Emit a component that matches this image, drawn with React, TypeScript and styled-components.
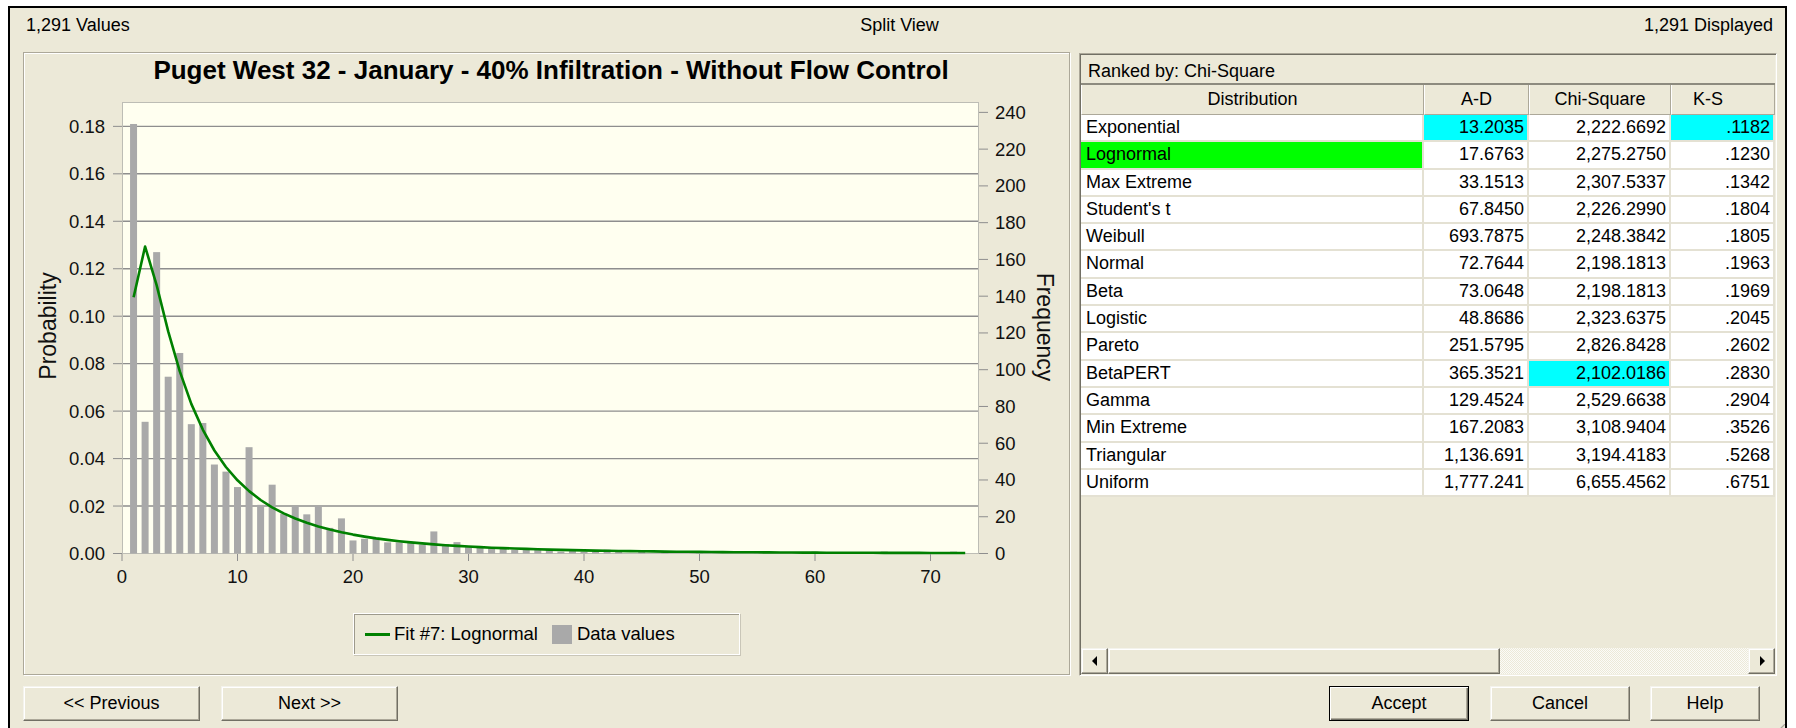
import React from "react";
import styled, { createGlobalStyle } from "styled-components";

const FACE = "#ece9d8";
const GRID = "#e4e1d3";
const SHADOW = "#aca899";
const DARK = "#716f64";

const GlobalStyle = createGlobalStyle`
  html, body { margin: 0; padding: 0; background: #fff; overflow: hidden; }
  body { font-family: "Liberation Sans", Arial, sans-serif; color: #000; }
`;

const Window = styled.div`
  position: relative;
  margin: 6px 0 0 8px;
  width: 1779px;
  height: 730px;
  box-sizing: border-box;
  border: 2px solid #000;
  border-bottom: none;
  background: ${FACE};
  display: flex;
  flex-direction: column;
  font-size: 18px;
  overflow: hidden;
`;

const StatusBar = styled.div`
  height: 34px;
  display: grid;
  grid-template-columns: 1fr auto 1fr;
  align-items: center;
  padding: 0 12px 0 16px;
`;

const StatusText = styled.span<{ $align: "left" | "center" | "right" }>`
  text-align: ${(p) => p.$align};
  white-space: nowrap;
`;

const Content = styled.div`
  display: flex;
  align-items: flex-start;
  gap: 9px;
  padding: 10px 0 0 13px;
`;

const ChartPanel = styled.div`
  width: 1047px;
  height: 623px;
  box-sizing: border-box;
  border: 1px solid ${SHADOW};
  box-shadow: inset 1px 1px 0 #fff, 1px 1px 0 #fff;
  display: flex;
  flex-direction: column;
  align-items: center;
`;

const ChartTitle = styled.div`
  height: 34px;
  line-height: 34px;
  padding-left: 9px;
  font-size: 26px;
  font-weight: bold;
  white-space: nowrap;
`;

const PlotSvg = styled.svg`
  display: block;
  width: 1045px;
  height: 518px;
  font-family: "Liberation Sans", Arial, sans-serif;
`;

const Legend = styled.div`
  margin-top: 8px;
  width: 387px;
  height: 42px;
  box-sizing: border-box;
  display: flex;
  align-items: center;
  padding-left: 11px;
  font-size: 18.5px;
  border: 1px solid #fff;
  box-shadow: inset 1px 1px 0 #9d9a8c, 1px 1px 0 #c9c6b8;
`;

const LegendLine = styled.span`
  width: 25px;
  height: 3px;
  background: #008000;
  margin-right: 4px;
`;

const LegendSwatch = styled.span`
  width: 20px;
  height: 19px;
  background: #a9a9a9;
  margin: 0 5px 0 14px;
`;

const TablePanel = styled.div`
  margin-top: 1px;
  width: 698px;
  height: 623px;
  box-sizing: border-box;
  padding: 1px;
  border: 1px solid;
  border-color: ${SHADOW} #fff #fff ${SHADOW};
  box-shadow: inset 1px 1px 0 ${DARK}, inset -1px -1px 0 #f1efe2;
  display: flex;
  flex-direction: column;
`;

const Caption = styled.div`
  height: 30px;
  box-sizing: border-box;
  padding: 4px 0 0 7px;
  line-height: 24px;
  border-bottom: 2px solid #8d8b7f;
`;

const Columns = styled.div`
  display: grid;
  grid-template-columns: 343px 105px 142px 104px;
`;

const HeadCell = styled.div<{ $pad?: number }>`
  height: 30px;
  box-sizing: border-box;
  line-height: 28px;
  text-align: center;
  padding-right: ${(p) => p.$pad ?? 0}px;
  border-left: 1px solid #fff;
  border-right: 1px solid ${SHADOW};
  border-bottom: 1px solid ${SHADOW};
  white-space: nowrap;
  overflow: hidden;
`;

const Cell = styled.div<{ $align: "left" | "right"; $tone?: string }>`
  height: 27.3px;
  box-sizing: border-box;
  border-right: 2px solid ${GRID};
  border-bottom: 2px solid ${GRID};
  background: ${(p) => p.$tone ?? "#fff"};
  padding: 0 3px 0 5px;
  line-height: 25.3px;
  text-align: ${(p) => p.$align};
  white-space: nowrap;
  overflow: hidden;
`;

const Filler = styled.div`
  flex: 1;
`;

const ScrollBar = styled.div`
  height: 26px;
  display: flex;
`;

const raised = `
  background: ${FACE};
  box-sizing: border-box;
  border: 1px solid;
  border-color: #f4f3ec ${DARK} ${DARK} #f4f3ec;
  box-shadow: inset -1px -1px 0 ${SHADOW}, inset 1px 1px 0 #fff;
`;

const ScrollButton = styled.div`
  ${raised}
  width: 27px;
  display: flex;
  align-items: center;
  justify-content: center;
`;

const ScrollThumb = styled.div`
  ${raised}
  width: 392px;
`;

const ScrollTrack = styled.div`
  flex: 1;
  background: repeating-conic-gradient(#fbfbf8 0 25%, ${FACE} 0 50%) 0 0 / 2px 2px;
`;

const ButtonRow = styled.div`
  display: flex;
  align-items: center;
  padding: 10px 0 0 13px;
  height: 35px;
`;

const Spacer = styled.div`
  flex: 1;
`;

const Button = styled.div<{ $w: number; $default?: boolean; $gap?: number }>`
  ${raised}
  width: ${(p) => p.$w}px;
  height: 35px;
  margin-left: ${(p) => p.$gap ?? 0}px;
  display: flex;
  align-items: center;
  justify-content: center;
  ${(p) =>
    p.$default
      ? `border-color: #000; box-shadow: inset 1px 1px 0 #fff, inset -1px -1px 0 ${DARK}, inset -2px -2px 0 ${SHADOW};`
      : ""}
`;

const Grip = styled.svg`
  position: absolute;
  right: 0;
  bottom: 0;
  width: 18px;
  height: 18px;
`;

/* chart data */
const PX0 = 122;
const PX_UNIT = 11.55;
const PY0 = 553.5;
const PY_UNIT = 2373;

const bars: [number, number][] = [
  [1, 0.181], [2, 0.0555], [3, 0.127], [4, 0.0745], [5, 0.0845], [6, 0.0545],
  [7, 0.055], [8, 0.0375], [9, 0.0345], [10, 0.028], [11, 0.0448], [12, 0.0205],
  [13, 0.029], [14, 0.0168], [15, 0.02], [16, 0.0165], [17, 0.02], [18, 0.0108],
  [19, 0.0148], [20, 0.0055], [21, 0.0062], [22, 0.0062], [23, 0.0047], [24, 0.0047],
  [25, 0.0047], [26, 0.0038], [27, 0.0093], [28, 0.0039], [29, 0.0048], [30, 0.0031],
  [31, 0.0031], [32, 0.0023], [33, 0.0023], [34, 0.0016], [35, 0.0023], [36, 0.0016],
  [37, 0.0016], [38, 0.0008], [39, 0.0016], [40, 0.0008], [41, 0.0008], [42, 0.0016],
  [43, 0.0008], [45, 0.0008], [47, 0.0008], [50, 0.0008], [55, 0.0008], [60, 0.0008],
  [66, 0.0008], [72, 0.0008],
];

const MU = 1.616;
const SIGMA = 1.04;
const lognormal = (x: number) =>
  Math.exp(-((Math.log(x) - MU) ** 2) / (2 * SIGMA * SIGMA)) / (x * SIGMA * Math.sqrt(2 * Math.PI));

const px = (v: number) => PX0 + v * PX_UNIT;
const py = (p: number) => PY0 - p * PY_UNIT;

const curvePoints = Array.from({ length: 73 }, (_, i) => {
  const x = i + 1;
  const y = x === 1 ? 0.108 : lognormal(x);
  return `${px(x).toFixed(1)},${py(y).toFixed(1)}`;
}).join(" ");

const probTicks = Array.from({ length: 10 }, (_, i) => i * 0.02);
const freqTicks = Array.from({ length: 13 }, (_, i) => i * 20);
const xTicks = [0, 10, 20, 30, 40, 50, 60, 70];

const FitChart = () => (
  <PlotSvg viewBox="24 87 1045 518">
    <rect x={122.5} y={102.5} width={856} height={451} fill="#fffff0" stroke="#bdbdb5" />
    {probTicks.slice(1).map((p) => (
      <line key={p} x1={123} x2={978} y1={py(p)} y2={py(p)} stroke="#8e8e8e" strokeWidth={1.4} />
    ))}
    {bars.map(([v, p]) => (
      <rect key={v} x={px(v) - 3.5} y={py(p)} width={7} height={PY0 - py(p)} fill="#a9a9a9" />
    ))}
    <polyline points={curvePoints} fill="none" stroke="#008000" strokeWidth={2.6} strokeLinejoin="round" />
    {probTicks.map((p) => (
      <g key={p}>
        <line x1={113} x2={122} y1={py(p)} y2={py(p)} stroke="#8e8e8e" />
        <text x={105} y={py(p) + 6.5} fontSize={18.5} textAnchor="end" fill="#111">
          {p.toFixed(2)}
        </text>
      </g>
    ))}
    {freqTicks.map((f) => {
      const y = PY0 - f * 1.838;
      return (
        <g key={f}>
          <line x1={979} x2={988} y1={y} y2={y} stroke="#8e8e8e" />
          <text x={995} y={y + 6.5} fontSize={18.5} fill="#111">
            {f}
          </text>
        </g>
      );
    })}
    {xTicks.map((v) => (
      <g key={v}>
        <line x1={px(v)} x2={px(v)} y1={554} y2={561} stroke="#8e8e8e" />
        <text x={px(v)} y={583} fontSize={18.5} textAnchor="middle" fill="#111">
          {v}
        </text>
      </g>
    ))}
    <text x={48} y={326} fontSize={23} textAnchor="middle" dominantBaseline="central" transform="rotate(-90 48 326)" fill="#111">
      Probability
    </text>
    <text x={1045} y={327} fontSize={23} textAnchor="middle" dominantBaseline="central" transform="rotate(90 1045 327)" fill="#111">
      Frequency
    </text>
  </PlotSvg>
);

const CYAN = "#00ffff";
const GREEN = "#00ff00";

const rows: string[][] = [
  ["Exponential", "13.2035", "2,222.6692", ".1182"],
  ["Lognormal", "17.6763", "2,275.2750", ".1230"],
  ["Max Extreme", "33.1513", "2,307.5337", ".1342"],
  ["Student's t", "67.8450", "2,226.2990", ".1804"],
  ["Weibull", "693.7875", "2,248.3842", ".1805"],
  ["Normal", "72.7644", "2,198.1813", ".1963"],
  ["Beta", "73.0648", "2,198.1813", ".1969"],
  ["Logistic", "48.8686", "2,323.6375", ".2045"],
  ["Pareto", "251.5795", "2,826.8428", ".2602"],
  ["BetaPERT", "365.3521", "2,102.0186", ".2830"],
  ["Gamma", "129.4524", "2,529.6638", ".2904"],
  ["Min Extreme", "167.2083", "3,108.9404", ".3526"],
  ["Triangular", "1,136.691", "3,194.4183", ".5268"],
  ["Uniform", "1,777.241", "6,655.4562", ".6751"],
];

const tones: Record<string, string> = {
  "0-1": CYAN,
  "0-3": CYAN,
  "1-0": GREEN,
  "9-2": CYAN,
};

const Arrow = ({ dir }: { dir: "left" | "right" }) => (
  <svg width="6" height="10" viewBox="0 0 6 10">
    <polygon points={dir === "left" ? "5,0 5,10 0,5" : "1,0 1,10 6,5"} fill="#000" />
  </svg>
);

export default function App() {
  return (
    <>
      <GlobalStyle />
      <Window>
        <StatusBar>
          <StatusText $align="left">1,291 Values</StatusText>
          <StatusText $align="center">Split View</StatusText>
          <StatusText $align="right">1,291 Displayed</StatusText>
        </StatusBar>
        <Content>
          <ChartPanel>
            <ChartTitle>Puget West 32 - January - 40% Infiltration - Without Flow Control</ChartTitle>
            <FitChart />
            <Legend>
              <LegendLine />
              <span>Fit #7: Lognormal</span>
              <LegendSwatch />
              <span>Data values</span>
            </Legend>
          </ChartPanel>
          <TablePanel>
            <Caption>Ranked by: Chi-Square</Caption>
            <Columns>
              <HeadCell>Distribution</HeadCell>
              <HeadCell>A-D</HeadCell>
              <HeadCell>Chi-Square</HeadCell>
              <HeadCell $pad={30}>K-S</HeadCell>
            </Columns>
            <Columns>
              {rows.map((r, ri) =>
                r.map((v, ci) => (
                  <Cell key={`${ri}-${ci}`} $align={ci === 0 ? "left" : "right"} $tone={tones[`${ri}-${ci}`]}>
                    {v}
                  </Cell>
                ))
              )}
            </Columns>
            <Filler />
            <ScrollBar>
              <ScrollButton>
                <Arrow dir="left" />
              </ScrollButton>
              <ScrollThumb />
              <ScrollTrack />
              <ScrollButton>
                <Arrow dir="right" />
              </ScrollButton>
            </ScrollBar>
          </TablePanel>
        </Content>
        <ButtonRow>
          <Button $w={177}>&lt;&lt; Previous</Button>
          <Button $w={177} $gap={21}>Next &gt;&gt;</Button>
          <Spacer />
          <Button $w={140} $default>Accept</Button>
          <Button $w={140} $gap={21}>Cancel</Button>
          <Button $w={110} $gap={20}>Help</Button>
          <Spacer style={{ flex: "0 0 25px" }} />
        </ButtonRow>
        <Grip viewBox="0 0 18 18">
          {[4, 8, 12].map((o) => (
            <g key={o}>
              <line x1={18} y1={18 - o - 1} x2={18 - o - 1} y2={18} stroke="#fff" strokeWidth={1} />
              <line x1={18} y1={18 - o} x2={18 - o} y2={18} stroke={SHADOW} strokeWidth={1.4} />
            </g>
          ))}
        </Grip>
      </Window>
    </>
  );
}
